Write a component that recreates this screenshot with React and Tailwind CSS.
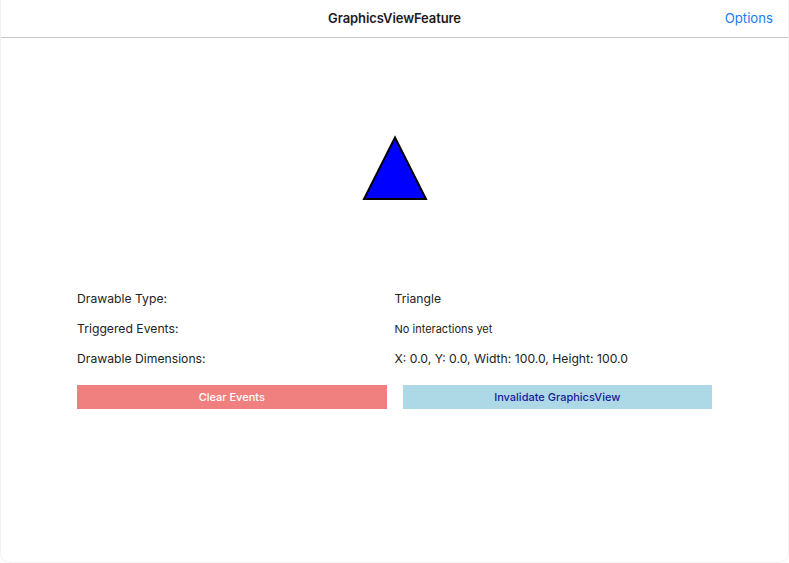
export default function App() {
  const font = { fontFamily: 'Inter, "Liberation Sans", sans-serif' };
  return (
    <div className="w-[789px] h-[563px] bg-white overflow-hidden" style={font}>
      <div className="h-full flex flex-col rounded-b-[10px] border-x border-b border-[#f2f2f2]">
        <div className="relative h-[38px] shrink-0 flex items-center justify-center border-b border-[#c6c6c6]">
          <span className="text-[13px] font-semibold text-[#1c1c1c] tracking-[-0.1px]">GraphicsViewFeature</span>
          <span className="absolute right-[15px] top-0 h-full flex items-center text-[13.2px] text-[#1a7cf5]">Options</span>
        </div>
        <div className="flex justify-center pt-[97px]">
          <svg width="68" height="68" viewBox="0 0 68 68">
            <polygon points="34,2.5 3,64 65,64" fill="#0000ff" stroke="#000" strokeWidth="2" strokeLinejoin="miter" />
          </svg>
        </div>
        <div className="mx-[76px] mt-[81px] grid grid-cols-2 text-[12.2px] text-[#222]">
          <div className="h-[30px] flex items-center">Drawable Type:</div>
          <div className="h-[30px] flex items-center">Triangle</div>
          <div className="h-[30px] flex items-center">Triggered Events:</div>
          <div className="h-[30px] flex items-center text-[11px]">No interactions yet</div>
          <div className="h-[30px] flex items-center">Drawable Dimensions:</div>
          <div className="h-[30px] flex items-center">X: 0.0, Y: 0.0, Width: 100.0, Height: 100.0</div>
        </div>
        <div className="mx-[76px] mt-[11px] grid grid-cols-2 gap-[16px]">
          <div className="h-[24px] bg-[#f08080] flex items-center justify-center text-[11px] font-medium text-white">Clear Events</div>
          <div className="h-[24px] bg-[#add8e6] flex items-center justify-center text-[11px] font-medium text-[#1a1a9a]">Invalidate GraphicsView</div>
        </div>
      </div>
    </div>
  );
}
